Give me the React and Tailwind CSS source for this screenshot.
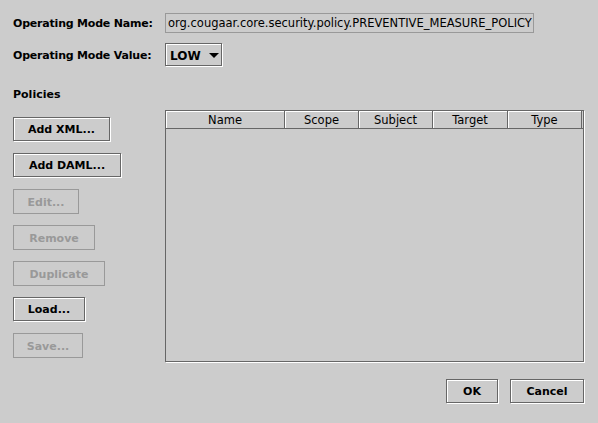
import React from 'react'

const font = { fontFamily: '"DejaVu Sans", "Liberation Sans", sans-serif' }

function Btn({ label, w, disabled }) {
  if (disabled) {
    return (
      <div className={`h-[25px] pt-[3px] border border-[#999999] flex items-center justify-center text-[11px] font-bold text-[#999999] whitespace-nowrap ${w}`}>
        {label}
      </div>
    )
  }
  return (
    <div className={`h-[25px] flex ${w}`}>
      <div className="flex-1 mr-px mb-px pt-[3px] border border-[#666666] shadow-[inset_1px_1px_0_#ffffff,1px_1px_0_#ffffff] flex items-center justify-center text-[11px] font-bold text-black whitespace-nowrap">
        {label}
      </div>
    </div>
  )
}

const cols = [
  ['Name', 'w-[119px]'],
  ['Scope', 'w-[74px]'],
  ['Subject', 'w-[74px]'],
  ['Target', 'w-[75px]'],
  ['Type', 'w-[74px]'],
]

export default function App() {
  return (
    <div className="w-[598px] h-[423px] bg-[#cccccc] text-black overflow-hidden" style={font}>
      <div className="flex items-center pt-[13px] pl-[13px] h-[33px]">
        <div className="w-[152px] pt-[2px] text-[11px] font-bold whitespace-nowrap tracking-[-0.2px]">Operating Mode Name:</div>
        <div className="w-[369px] h-[20px] pt-[1px] border border-[#999999] flex items-center pl-[2px] text-[11.5px] whitespace-nowrap">
          org.cougaar.core.security.policy.PREVENTIVE_MEASURE_POLICY
        </div>
      </div>
      <div className="flex items-center pt-[10px] pl-[13px]">
        <div className="w-[152px] pt-[2px] text-[11px] font-bold whitespace-nowrap tracking-[-0.2px]">Operating Mode Value:</div>
        <div className="w-[58px] h-[24px] flex">
          <div className="flex-1 mr-px mb-px pt-[2px] border border-[#666666] shadow-[inset_1px_1px_0_#ffffff,1px_1px_0_#ffffff] flex items-center pl-[4px] gap-[8px] text-[12px] font-bold">
            <span>LOW</span>
            <svg width="10" height="5" viewBox="0 0 10 5">
              <polygon points="0,0 10,0 5,5" fill="#000" />
            </svg>
          </div>
        </div>
      </div>
      <div className="pl-[13px] pt-[20px] text-[11px] font-bold h-[42px]">Policies</div>
      <div className="flex pl-[13px] pt-[1px]">
        <div className="w-[152px] flex flex-col gap-[11px] items-start pt-[7px]">
          <Btn label="Add XML..." w="w-[98px]" />
          <Btn label="Add DAML..." w="w-[109px]" />
          <Btn label="Edit..." w="w-[66px]" disabled />
          <Btn label="Remove" w="w-[82px]" disabled />
          <Btn label="Duplicate" w="w-[92px]" disabled />
          <Btn label="Load..." w="w-[73px]" />
          <Btn label="Save..." w="w-[70px]" disabled />
        </div>
        <div className="flex flex-col">
          <div className="w-[420px] h-[253px] flex">
            <div className="flex-1 mr-px mb-px border border-[#666666] shadow-[1px_1px_0_#ffffff] flex flex-col">
              <div className="flex h-[18px] border-b border-[#666666]">
                {cols.map(([c, w]) => (
                  <div key={c} className={`${w} pt-[2px] border-r border-[#666666] shadow-[inset_1px_1px_0_#ffffff] flex items-center justify-center text-[11.5px]`}>
                    {c}
                  </div>
                ))}
              </div>
            </div>
          </div>
          <div className="flex justify-end gap-[11px] pt-[16px]">
            <Btn label="OK" w="w-[53px]" />
            <Btn label="Cancel" w="w-[75px]" />
          </div>
        </div>
      </div>
    </div>
  )
}
